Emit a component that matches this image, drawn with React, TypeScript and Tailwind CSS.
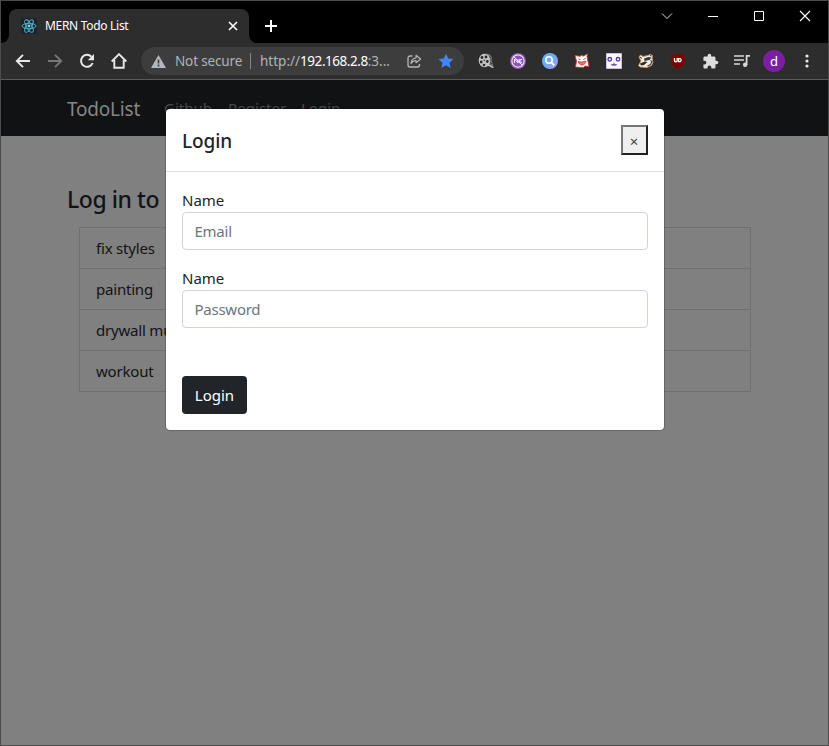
import type { ReactNode } from "react";

function Icon({ size = 16, box = 16, children }: { size?: number; box?: number; children: ReactNode }) {
  return (
    <svg width={size} height={size} viewBox={`0 0 ${box} ${box}`} fill="none" className="block shrink-0">
      {children}
    </svg>
  );
}

function ReactLogo() {
  return (
    <Icon>
      <rect width="16" height="16" rx="1" fill="#20232a" />
      <g stroke="#55b9d3" strokeWidth="0.9">
        <ellipse cx="8" cy="8" rx="7" ry="2.7" />
        <ellipse cx="8" cy="8" rx="7" ry="2.7" transform="rotate(60 8 8)" />
        <ellipse cx="8" cy="8" rx="7" ry="2.7" transform="rotate(120 8 8)" />
      </g>
      <circle cx="8" cy="8" r="1.4" fill="#61dafb" />
    </Icon>
  );
}

function TitleBar() {
  return (
    <div className="flex h-[42px] items-end bg-black">
      <div className="relative ml-2 flex h-[34px] w-[240px] items-center rounded-t-lg bg-[#2d2d2d] pr-[10px] pl-[12px]">
        <svg width="8" height="8" className="absolute bottom-0 -left-2">
          <path d="M8 0v8H0a8 8 0 0 0 8-8z" fill="#2d2d2d" />
        </svg>
        <svg width="8" height="8" className="absolute -right-2 bottom-0">
          <path d="M0 0v8h8a8 8 0 0 1-8-8z" fill="#2d2d2d" />
        </svg>
        <ReactLogo />
        <span className="ml-[8px] flex-1 text-[12px] tracking-[-0.3px] text-white">MERN Todo List</span>
        <Icon size={12} box={12}>
          <path d="M2 2l8 8M10 2l-8 8" stroke="#fff" strokeWidth="1.6" />
        </Icon>
      </div>
      <div className="mb-[11px] ml-[16px]">
        <Icon size={12} box={12}>
          <path d="M6 0v12M0 6h12" stroke="#fff" strokeWidth="2" />
        </Icon>
      </div>
      <div className="mb-[21px] ml-auto flex items-center gap-[34px] pr-[17px]">
        <Icon size={12} box={12}>
          <path d="M1 3.5l5 5 5-5" stroke="#ddd" />
        </Icon>
        <Icon size={12} box={12}>
          <path d="M1 6.5h10" stroke="#fff" />
        </Icon>
        <Icon size={12} box={12}>
          <path d="M1.5 1.5h9v9h-9z" stroke="#fff" />
        </Icon>
        <Icon size={12} box={12}>
          <path d="M1 1l10 10M11 1L1 11" stroke="#fff" strokeWidth="1.1" />
        </Icon>
      </div>
    </div>
  );
}

function AddressBar() {
  return (
    <div className="ml-[14px] flex h-7 w-[323px] items-center rounded-full bg-[#3d3d3d] pl-[10px] text-[13.5px] text-[#b0b3b6]">
      <Icon size={15} box={15}>
        <path d="M7.5 1L15 14H0z" fill="#b4b7bd" />
        <path d="M7.5 5.5v4M7.5 10.5v2" stroke="#3d3d3d" strokeWidth="1.6" />
      </Icon>
      <span className="ml-[9px] w-[67px] whitespace-nowrap tracking-[-0.15px]">Not secure</span>
      <span className="ml-[8px] h-4 w-px bg-[#85888b]" />
      <span className="ml-[9px] w-[131px] whitespace-nowrap">
        http://<span className="tracking-[-0.45px] text-white">192.168.2.8</span>:3...
      </span>
      <span className="ml-[15px]">
        <Icon>
          <path d="M6.500 3H4a2 2 0 0 0-2 2v7a2 2 0 0 0 2 2h7.500a2 2 0 0 0 2-2v-1" stroke="#b8b8b8" strokeWidth="1.300" />
          <path d="M5 10.500c.3-3.500 2-5.300 5-5.500V2.300L14.600 6 10 9.700V7.500c-2.200 0-3.700.8-5 3z" stroke="#b8b8b8" strokeWidth="1.200" strokeLinejoin="round" />
        </Icon>
      </span>
      <span className="ml-[16px]">
        <Icon>
          <path d="M8 .8l2.200 4.800 5.300.5-4 3.600 1.200 5.300L8 12.200 3.300 15l1.200-5.300-4-3.600 5.300-.5z" fill="#4285f4" />
        </Icon>
      </span>
    </div>
  );
}

function Extensions() {
  return (
    <div className="ml-[14px] flex items-center gap-4">
      <Icon>
        <path d="M7 1c5-1.500 8 3 7 7.500l1.500 5-1.500.5c-1.500-1.500-2-2.500-4-1z" fill="#777" />
        <ellipse cx="6.500" cy="7.500" rx="5.800" ry="6.800" fill="#c4c4c4" />
        <path d="M11.500 3.500l1.500 2M12 6.500l1.500 1.500M12 9.500l2 1.500" stroke="#292929" />
        <path d="M10 12.500c2-.5 3 2 5.500 2" stroke="#d0d0d0" strokeWidth="1.200" />
        <g fill="#292929">
          <circle cx="4" cy="4.500" r="1.400" />
          <circle cx="8" cy="4" r="1.400" />
          <circle cx="3.200" cy="9" r="1.400" />
          <circle cx="6" cy="12" r="1.300" />
          <circle cx="9.300" cy="8.500" r="1.400" />
          <circle cx="6.300" cy="7.200" r=".8" />
        </g>
      </Icon>
      <Icon>
        <circle cx="8" cy="8" r="8" fill="#8e55b0" />
        <circle cx="8" cy="8" r="6.100" stroke="#eadcf2" strokeWidth="1.200" />
        <path d="M4.500 10V6l3.500 4V6M12 6.500H9.500v3.300H12M9.500 8h2M3.700 3.700l8.600 8.600" stroke="#fff" strokeWidth=".9" />
      </Icon>
      <Icon>
        <defs>
          <linearGradient id="lens" x1="0" y1="0" x2="1" y2="1">
            <stop stopColor="#55b5f7" />
            <stop offset=".5" stopColor="#72aaf5" />
            <stop offset="1" stopColor="#aa9df5" />
          </linearGradient>
        </defs>
        <circle cx="8" cy="8" r="8" fill="url(#lens)" />
        <circle cx="7" cy="7" r="3.200" stroke="#fff" strokeWidth="1.600" />
        <path d="M9.300 9.300l3 3" stroke="#fff" strokeWidth="1.900" />
      </Icon>
      <Icon>
        <path d="M1 2.500l5 .8 1.500-1 2 .8 4-2.300-.5 3 2 9.700-4-.5-1.500 1.500-8-.5L2.500 8z" fill="#fff" stroke="#c93a36" strokeWidth=".9" />
        <path d="M4.500 6l2 .8M9.500 6.500l2-1" stroke="#d4423e" />
        <path d="M4 8.500c2.500.8 5 .6 8-.5-.5 5-6.500 5.500-8 .5z" fill="#e8746c" stroke="#cf302d" strokeWidth=".8" />
      </Icon>
      <Icon>
        <rect width="16" height="16" fill="#faf8ff" />
        <path d="M0 .5h16M.5 0v16M15.500 0v16M0 15.500h16" stroke="#aa91d7" strokeWidth=".6" />
        <circle cx="3.800" cy="6.300" r="1.800" stroke="#55369c" strokeWidth="1.300" />
        <circle cx="12" cy="6.300" r="1.800" stroke="#55369c" strokeWidth="1.300" />
        <path d="M5.500 11c.7 1.500 2 1.500 2.500 0 .5 1.500 1.800 1.500 2.500 0" stroke="#55369c" strokeWidth="1.100" />
      </Icon>
      <Icon>
        <path d="M1 4l1.500-2L5 3.500l4-.8L12.500 1.500l2 1-.3 3L15 9l-1.500 3.500L9 14.500 2 14 .5 12.500 3 8z" fill="#f5efe6" stroke="#c98f58" strokeWidth=".9" />
        <path d="M6 5.500L10.500 4l3 .5-2 2.500-5 1z" fill="#363636" />
        <path d="M2 10.500l5-2 2.500.5L6 12l-3 .5z" fill="#292929" />
        <path d="M12.500 7.500l1.500 1-1.500 3-3 1.500" stroke="#3b3b3b" strokeWidth="1.100" />
        <path d="M2 4l2 1.500M12 2.500l1.500.5" stroke="#333" />
      </Icon>
      <Icon>
        <path d="M8 0c2 1.400 4.500 2.200 7 2.200v5.300c0 4-3 6.700-7 8.500-4-1.800-7-4.500-7-8.500V2.200C3.500 2.200 6 1.400 8 0z" fill="#800000" stroke="#5a2020" strokeWidth=".6" />
        <path d="M4.500 5v2.500a1.300 1.300 0 0 0 2.700 0V5" stroke="#fff" strokeWidth="1.300" />
        <path d="M8.600 5.600h1a1.500 1.500 0 0 1 0 3.100h-1z" stroke="#fff" strokeWidth="1.200" />
      </Icon>
      <Icon size={17} box={24}>
        <path d="M20.500 11H19V7c0-1.100-.9-2-2-2h-4V3.500a2.500 2.500 0 0 0-5 0V5H4c-1.100 0-2 .9-2 2v3.800h1.500a2.700 2.700 0 0 1 0 5.400H2V20c0 1.100.9 2 2 2h3.800v-1.500a2.700 2.700 0 0 1 5.400 0V22H17c1.100 0 2-.9 2-2v-4h1.500a2.500 2.500 0 0 0 0-5z" fill="#dedede" />
      </Icon>
    </div>
  );
}

function Toolbar() {
  return (
    <div className="flex h-[37px] items-center border-b border-[#5a5a5a] bg-[#2d2d2d] pl-[14px]">
      <div className="flex items-center gap-4">
        <Icon>
          <path d="M15 8H2M8 1.800L1.800 8 8 14.200" stroke="#e8e8e8" strokeWidth="1.900" />
        </Icon>
        <Icon>
          <path d="M1 8h13M8 1.800L14.200 8 8 14.200" stroke="#777" strokeWidth="1.900" />
        </Icon>
        <Icon>
          <path d="M13.600 10a6 6 0 1 1-1.200-6.300" stroke="#e8e8e8" strokeWidth="2" />
          <path d="M15 1v6.200H8.800z" fill="#e8e8e8" />
        </Icon>
        <Icon>
          <path d="M.7 8.500L8 1.200l7.300 7.300M3.300 7v7.800h9.400V7" stroke="#e8e8e8" strokeWidth="1.900" />
        </Icon>
      </div>
      <AddressBar />
      <Extensions />
      <div className="ml-[14px]">
        <Icon size={18} box={18}>
          <path d="M1 4h10M1 8h10M1 12h6" stroke="#d8d8d8" strokeWidth="1.700" />
          <path d="M13.600 13V3.800H17" stroke="#d8d8d8" strokeWidth="1.800" />
          <circle cx="12.100" cy="12.800" r="2.200" fill="#d8d8d8" />
        </Icon>
      </div>
      <div className="ml-[12px] flex size-[22px] items-center justify-center rounded-full bg-[#7b1fa2] text-[13px] leading-none text-white">
        d
      </div>
      <div className="ml-[14px]">
        <Icon>
          <circle cx="8" cy="3" r="1.600" fill="#e8e8e8" />
          <circle cx="8" cy="8" r="1.600" fill="#e8e8e8" />
          <circle cx="8" cy="13" r="1.600" fill="#e8e8e8" />
        </Icon>
      </div>
    </div>
  );
}

function LoginModal() {
  return (
    <form className="absolute top-7 left-[164px] flex h-[323px] w-[500px] flex-col rounded-[5px] border border-black/20 bg-white bg-clip-padding text-[#212529]">
      <div className="flex h-[63px] shrink-0 items-start justify-between border-b border-[#dee2e6] p-4">
        <h5 className="text-[19px] leading-[32px] font-medium tracking-[-0.1px]">Login</h5>
        <button
          type="button"
          className="h-[30px] w-[27px] border-2 border-t-[#767676] border-r-[#212121] border-b-[#212121] border-l-[#767676] bg-[#efefef] pr-px text-[15px] leading-[28px] text-[#444]"
        >
          ×
        </button>
      </div>
      <div className="flex flex-col items-start px-4 pt-[16px]">
        <label className="leading-6">Name</label>
        <input
          placeholder="Email"
          className="h-[38px] w-full rounded border border-[#ced4da] px-[11.500px] tracking-[-0.25px] placeholder:text-[#6c757d]"
        />
        <label className="mt-4 leading-6">Name</label>
        <input
          placeholder="Password"
          className="h-[38px] w-full rounded border border-[#ced4da] px-[11.500px] tracking-[-0.25px] placeholder:text-[#6c757d]"
        />
        <button type="button" className="mt-12 h-[38px] w-[65px] rounded bg-[#212529] text-white">
          Login
        </button>
      </div>
    </form>
  );
}

const todos = ["fix styles", "painting", "drywall mud", "workout"];

export default function App() {
  return (
    <div className="flex h-[746px] w-[829px] flex-col overflow-hidden border border-[#4c4c4c] bg-[#808080] font-['Noto_Sans',sans-serif] text-[15px]">
      <TitleBar />
      <Toolbar />
      <div className="relative flex-1">
        <nav className="flex h-14 items-center bg-[#111214] pl-[66px] text-[#49494b]">
          <span className="w-[97px] pt-0.5 text-[19px] tracking-[-0.2px] text-[#858686]">TodoList</span>
          <span className="w-16">Github</span>
          <span className="w-[73px]">Register</span>
          <span>Login</span>
        </nav>
        <main className="px-[66px] pt-[49px] text-[#111315]">
          <h4 className="text-[23px] leading-[29px] font-medium tracking-[-0.45px]">Log in to</h4>
          <ul className="mt-[13px] ml-3 w-[672px] border border-[#707070] tracking-[-0.2px]">
            {todos.map((todo) => (
              <li key={todo} className="h-[41px] border-b border-[#707070] px-4 leading-[41px] last:h-10 last:border-b-0">
                {todo}
              </li>
            ))}
          </ul>
        </main>
        <LoginModal />
      </div>
    </div>
  );
}
